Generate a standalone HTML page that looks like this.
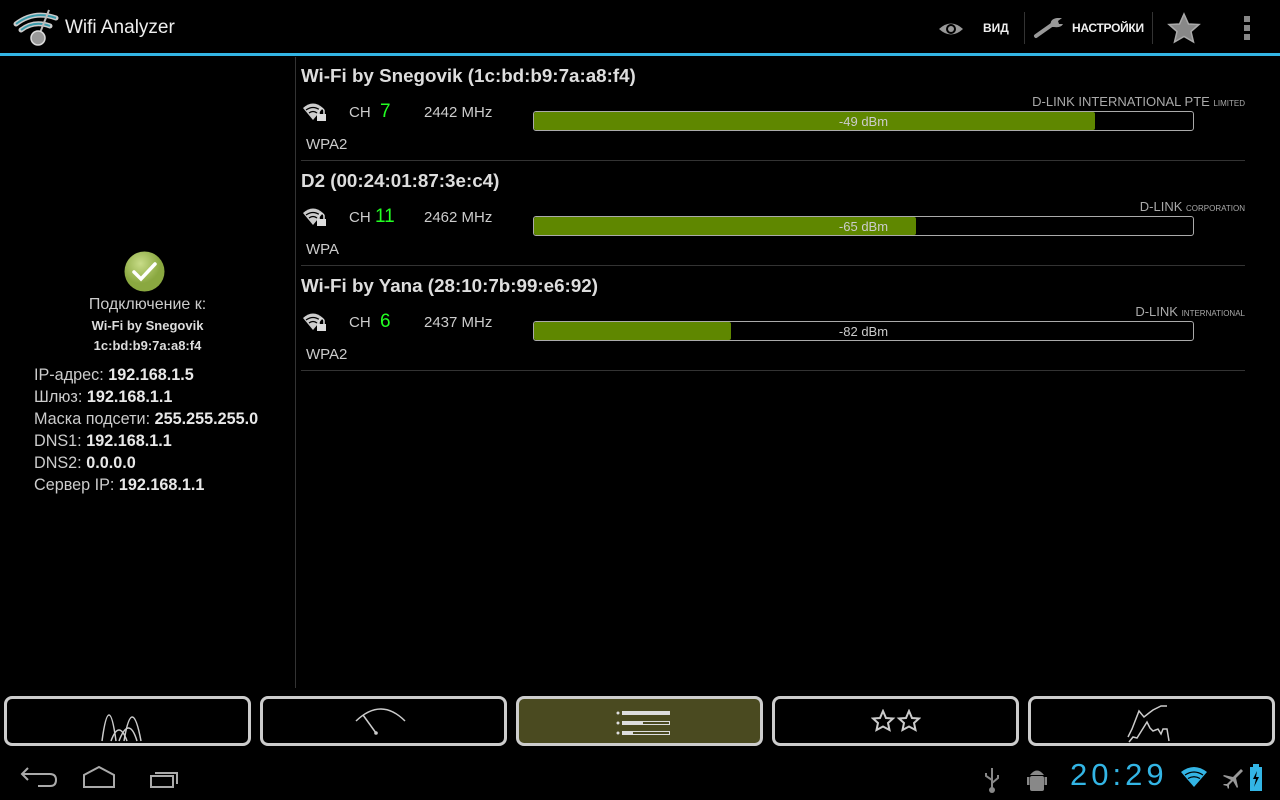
<!DOCTYPE html>
<html><head><meta charset="utf-8"><style>
*{margin:0;padding:0;box-sizing:border-box}
body{width:1280px;height:800px;background:#000;font-family:"Liberation Sans",sans-serif;color:#ccc;position:relative;overflow:hidden}
.abs{position:absolute}
.t{color:#ddd;font-size:18.8px;font-weight:bold;white-space:nowrap}
.sm{font-size:15px;color:#ccc;white-space:nowrap}
.bar{position:absolute;left:533px;width:661px;height:20px;border:1px solid #aaa;border-radius:3px;background:#000;overflow:hidden}
.bar .f{position:absolute;left:0;top:0;bottom:0;background:#5f8700;border-radius:2px}
.bar .l{position:absolute;left:0;right:0;top:2px;text-align:center;font-size:13px;color:#ccc}
.ven{position:absolute;right:35px;font-size:13px;color:#aaa;white-space:nowrap}
.ven small{font-size:8px}
.sep{position:absolute;left:301px;width:944px;height:1px;background:#333}
.btn{position:absolute;top:696px;width:247px;height:50px;border:3px solid #ccc;border-radius:8px;background:#000}
.left{position:absolute;left:34px;font-size:16.2px;color:#ccc;white-space:nowrap}
.left b{color:#e8e8e8}
</style></head><body>
<svg class="abs" style="left:12px;top:8px" width="50" height="40" viewBox="0 0 50 40">
<path d="M4 16 Q22 2 44 10" stroke="#ccc" stroke-width="5" fill="none" stroke-linecap="round"/>
<path d="M4 16 Q22 2 44 10" stroke="#3a9aaa" stroke-width="2" fill="none"/>
<path d="M9 22 Q22 12 38 18" stroke="#ccc" stroke-width="5" fill="none" stroke-linecap="round"/>
<path d="M9 22 Q22 12 38 18" stroke="#3a9aaa" stroke-width="2" fill="none"/>
<line x1="26" y1="30" x2="37" y2="2" stroke="#bbb" stroke-width="2"/>
<circle cx="26" cy="30" r="7" fill="#999" stroke="#ddd" stroke-width="1.5"/>
</svg>
<div class="abs" style="left:65px;top:17px;font-size:19px;color:#eee">Wifi Analyzer</div>
<svg class="abs" style="left:938px;top:20px" width="26" height="18" viewBox="0 0 26 18"><path d="M1 9 Q13 -2 25 9 Q13 20 1 9Z" fill="#999"/><circle cx="13" cy="9" r="5" fill="#000"/><circle cx="13" cy="9" r="3" fill="#999"/></svg>
<div class="abs" style="left:983px;top:21px;font-size:12px;font-weight:bold;color:#eee">ВИД</div>
<div class="abs" style="left:1024px;top:12px;width:1px;height:32px;background:#333"></div>
<svg class="abs" style="left:1033px;top:15px" width="32" height="24" viewBox="0 0 32 24"><path d="M3 21 L20 9" stroke="#999" stroke-width="4" stroke-linecap="round"/><path d="M18 12 Q16 4 24 3 L29 3 L25 6 L26 9 L30 9 Q28 13 21 12" fill="#999"/></svg>
<div class="abs" style="left:1072px;top:21px;font-size:12px;font-weight:bold;color:#eee;letter-spacing:-0.3px">НАСТРОЙКИ</div>
<div class="abs" style="left:1152px;top:12px;width:1px;height:32px;background:#333"></div>
<svg class="abs" style="left:1166px;top:12px" width="36" height="32" viewBox="0 0 36 32"><path d="M18 2 L22.5 12 L33 12.5 L25 19.5 L27.5 30 L18 24.5 L8.5 30 L11 19.5 L3 12.5 L13.5 12Z" fill="#888" stroke="#aaa" stroke-width="1.5"/></svg>
<div class="abs" style="left:1244px;top:16px;width:6px;height:6px;background:#888"></div>
<div class="abs" style="left:1244px;top:25px;width:6px;height:6px;background:#888"></div>
<div class="abs" style="left:1244px;top:34px;width:6px;height:6px;background:#888"></div>
<div class="abs" style="left:0;top:53px;width:1280px;height:3px;background:#33b5e5"></div>
<div class="abs" style="left:295px;top:57px;width:1px;height:631px;background:#333"></div>
<svg class="abs" style="left:124px;top:251px" width="41" height="41" viewBox="0 0 41 41"><defs><radialGradient id="g" cx="0.4" cy="0.3"><stop offset="0" stop-color="#c8dc88"/><stop offset="1" stop-color="#8aa840"/></radialGradient></defs><circle cx="20.5" cy="20.5" r="20" fill="url(#g)"/><path d="M10 21 L17 28 L31 13" stroke="#fff" stroke-width="3.5" fill="none" stroke-linecap="round"/></svg>
<div class="abs" style="left:0;width:295px;top:296px;text-align:center;font-size:16px;color:#ccc">Подключение к:</div>
<div class="abs" style="left:0;width:295px;top:318px;text-align:center;font-size:13px;font-weight:bold;color:#ddd">Wi-Fi by Snegovik</div>
<div class="abs" style="left:0;width:295px;top:338px;text-align:center;font-size:13px;font-weight:bold;color:#ddd">1c:bd:b9:7a:a8:f4</div>
<div class="left" style="top:366px">IP-адрес: <b>192.168.1.5</b></div>
<div class="left" style="top:388px">Шлюз: <b>192.168.1.1</b></div>
<div class="left" style="top:410px">Маска подсети: <b>255.255.255.0</b></div>
<div class="left" style="top:432px">DNS1: <b>192.168.1.1</b></div>
<div class="left" style="top:454px">DNS2: <b>0.0.0.0</b></div>
<div class="left" style="top:476px">Сервер IP: <b>192.168.1.1</b></div>

<div class="t abs" style="left:301px;top:65px">Wi-Fi by Snegovik (1c:bd:b9:7a:a8:f4)</div>
<svg class="abs" style="left:302px;top:102px" width="26" height="20" viewBox="0 0 26 20"><path d="M1 6 Q11 -3 21 6 L11 18Z" fill="#ccc"/><path d="M4 8 Q11 3 18 8" stroke="#000" stroke-width="1.2" fill="none"/><path d="M7 11 Q11 8 15 11" stroke="#000" stroke-width="1.2" fill="none"/><rect x="15" y="12" width="9" height="7" fill="#ddd"/><path d="M17 12 V9 A2.5 2.5 0 0 1 22 9 V12" stroke="#ddd" stroke-width="1.5" fill="none"/></svg>
<div class="sm abs" style="left:349px;top:104px">CH</div>
<div class="abs" style="left:380px;top:101px;font-size:19px;color:#2f2">7</div>
<div class="sm abs" style="left:424px;top:104px">2442 MHz</div>
<div class="ven" style="top:94px">D-LINK INTERNATIONAL PTE <small>LIMITED</small></div>
<div class="bar" style="top:111px"><div class="f" style="width:561px"></div><div class="l">-49 dBm</div></div>
<div class="sm abs" style="left:306px;top:136px">WPA2</div>
<div class="sep" style="top:160px"></div>

<div class="t abs" style="left:301px;top:170px">D2 (00:24:01:87:3e:c4)</div>
<svg class="abs" style="left:302px;top:207px" width="26" height="20" viewBox="0 0 26 20"><path d="M1 6 Q11 -3 21 6 L11 18Z" fill="#ccc"/><path d="M4 8 Q11 3 18 8" stroke="#000" stroke-width="1.2" fill="none"/><path d="M7 11 Q11 8 15 11" stroke="#000" stroke-width="1.2" fill="none"/><rect x="15" y="12" width="9" height="7" fill="#ddd"/><path d="M17 12 V9 A2.5 2.5 0 0 1 22 9 V12" stroke="#ddd" stroke-width="1.5" fill="none"/></svg>
<div class="sm abs" style="left:349px;top:209px">CH</div>
<div class="abs" style="left:375px;top:206px;font-size:19px;color:#2f2">11</div>
<div class="sm abs" style="left:424px;top:209px">2462 MHz</div>
<div class="ven" style="top:199px">D-LINK <small>CORPORATION</small></div>
<div class="bar" style="top:216px"><div class="f" style="width:382px"></div><div class="l">-65 dBm</div></div>
<div class="sm abs" style="left:306px;top:241px">WPA</div>
<div class="sep" style="top:265px"></div>

<div class="t abs" style="left:301px;top:275px">Wi-Fi by Yana (28:10:7b:99:e6:92)</div>
<svg class="abs" style="left:302px;top:312px" width="26" height="20" viewBox="0 0 26 20"><path d="M1 6 Q11 -3 21 6 L11 18Z" fill="#ccc"/><path d="M4 8 Q11 3 18 8" stroke="#000" stroke-width="1.2" fill="none"/><path d="M7 11 Q11 8 15 11" stroke="#000" stroke-width="1.2" fill="none"/><rect x="15" y="12" width="9" height="7" fill="#ddd"/><path d="M17 12 V9 A2.5 2.5 0 0 1 22 9 V12" stroke="#ddd" stroke-width="1.5" fill="none"/></svg>
<div class="sm abs" style="left:349px;top:314px">CH</div>
<div class="abs" style="left:380px;top:311px;font-size:19px;color:#2f2">6</div>
<div class="sm abs" style="left:424px;top:314px">2437 MHz</div>
<div class="ven" style="top:304px">D-LINK <small>INTERNATIONAL</small></div>
<div class="bar" style="top:321px"><div class="f" style="width:197px"></div><div class="l">-82 dBm</div></div>
<div class="sm abs" style="left:306px;top:346px">WPA2</div>
<div class="sep" style="top:370px"></div>

<div class="btn" style="left:4px"><svg class="abs" style="left:92px;top:4px" width="60" height="40" viewBox="0 0 60 40"><path d="M3 38 Q10 -14 17 38" stroke="#ccc" stroke-width="1.5" fill="none"/><path d="M12 38 Q20 16 28 38" stroke="#ccc" stroke-width="1.5" fill="none"/><path d="M20 38 Q30 12 38 38" stroke="#ccc" stroke-width="1.5" fill="none"/><path d="M25 38 Q33 -10 42 38" stroke="#ccc" stroke-width="1.5" fill="none"/></svg></div>
<div class="btn" style="left:260px"><svg class="abs" style="left:90px;top:6px" width="60" height="34" viewBox="0 0 60 34"><path d="M3 16 Q28 -8 52 16" stroke="#ccc" stroke-width="1.5" fill="none"/><line x1="10" y1="10" x2="23" y2="28" stroke="#ccc" stroke-width="1.5"/><circle cx="23" cy="28" r="1.8" fill="#ccc"/></svg></div>
<div class="btn" style="left:516px;background:#4a4a20"><svg class="abs" style="left:94px;top:9px" width="60" height="30" viewBox="0 0 60 30"><g fill="#ddd"><circle cx="5" cy="5" r="1.5"/><circle cx="5" cy="15" r="1.5"/><circle cx="5" cy="25" r="1.5"/><rect x="9" y="3" width="48" height="4"/><rect x="9" y="13" width="48" height="4"/><rect x="9" y="23" width="48" height="4"/></g><rect x="30" y="14" width="26" height="2" fill="#4a4a20"/><rect x="20" y="24" width="36" height="2" fill="#4a4a20"/></svg></div>
<div class="btn" style="left:772px"><svg class="abs" style="left:96px;top:10px" width="50" height="26" viewBox="0 0 50 26"><g fill="none" stroke="#ccc" stroke-width="2"><path d="M12 2 L15 9 L22 9.5 L17 14 L18.5 21 L12 17.5 L5.5 21 L7 14 L2 9.5 L9 9Z"/><path d="M38 2 L41 9 L48 9.5 L43 14 L44.5 21 L38 17.5 L31.5 21 L33 14 L28 9.5 L35 9Z"/></g></svg></div>
<div class="btn" style="left:1028px"><svg class="abs" style="left:92px;top:2px" width="60" height="44" viewBox="0 0 60 44"><path d="M5 36 L9 28 L16 10 L21 16 L26 12 L30 9 L38 5 L44 5" stroke="#ccc" stroke-width="1.5" fill="none"/><path d="M6 41 L10 36 L14 37 L19 29 L24 21 L27 27 L30 30 L35 28 L38 33 L40 28 L44 28 L46 40" stroke="#ccc" stroke-width="1.5" fill="none"/></svg></div>

<svg class="abs" style="left:18px;top:765px" width="40" height="24" viewBox="0 0 40 24"><path d="M10 3 L4 9 L10 15 M4 9 L32 9 Q38 9 38 15 Q38 21 32 21 L20 21" stroke="#aaa" stroke-width="2" fill="none"/></svg>
<svg class="abs" style="left:82px;top:765px" width="34" height="24" viewBox="0 0 34 24"><path d="M2 22 L2 10 L17 2 L32 10 L32 22Z" stroke="#aaa" stroke-width="2" fill="none"/></svg>
<svg class="abs" style="left:150px;top:768px" width="30" height="22" viewBox="0 0 30 22"><rect x="1" y="8" width="22" height="11" stroke="#aaa" stroke-width="2" fill="none"/><path d="M5 5 L27 5 L27 16" stroke="#aaa" stroke-width="2" fill="none"/></svg>
<svg class="abs" style="left:982px;top:766px" width="20" height="28" viewBox="0 0 20 28"><path d="M10 2 V24 M10 14 L4 10 V7 M10 17 L16 12 V9" stroke="#888" stroke-width="2" fill="none"/><circle cx="10" cy="24" r="3" fill="#888"/></svg>
<svg class="abs" style="left:1026px;top:766px" width="22" height="28" viewBox="0 0 22 28"><path d="M4 9 Q11 0 18 9Z" fill="#888"/><rect x="4" y="10" width="14" height="15" rx="2" fill="#888"/><rect x="1" y="11" width="2.5" height="8" fill="#888"/><rect x="18.5" y="11" width="2.5" height="8" fill="#888"/></svg>
<div class="abs" style="left:1070px;top:757px;font-size:31px;color:#33b5e5;letter-spacing:4px">20:29</div>
<svg class="abs" style="left:1180px;top:766px" width="28" height="22" viewBox="0 0 28 22"><path d="M1 6 Q14 -4 27 6 L14 21Z" fill="#33b5e5"/><path d="M5 9 Q14 3 23 9 M8 12.5 Q14 9 20 12.5" stroke="#000" stroke-width="1.3" fill="none"/></svg>
<svg class="abs" style="left:1220px;top:766px" width="24" height="24" viewBox="0 0 24 24"><path d="M21 3 L13 11 L4 9 L3 10 L11 14 L7 18 L4 18 L3 19 L7 20 L8 23 L9 22 L9 19 L13 15 L17 22 L18 21 L16 12 L23 5Z" fill="#999"/></svg>
<svg class="abs" style="left:1248px;top:763px" width="16" height="30" viewBox="0 0 16 30"><rect x="5" y="1" width="6" height="3" fill="#33b5e5"/><rect x="2" y="4" width="12" height="24" fill="#33b5e5"/><path d="M9 8 L5 16 H8 L6 24 L11 14 H8Z" fill="#000"/></svg>
</body></html>
